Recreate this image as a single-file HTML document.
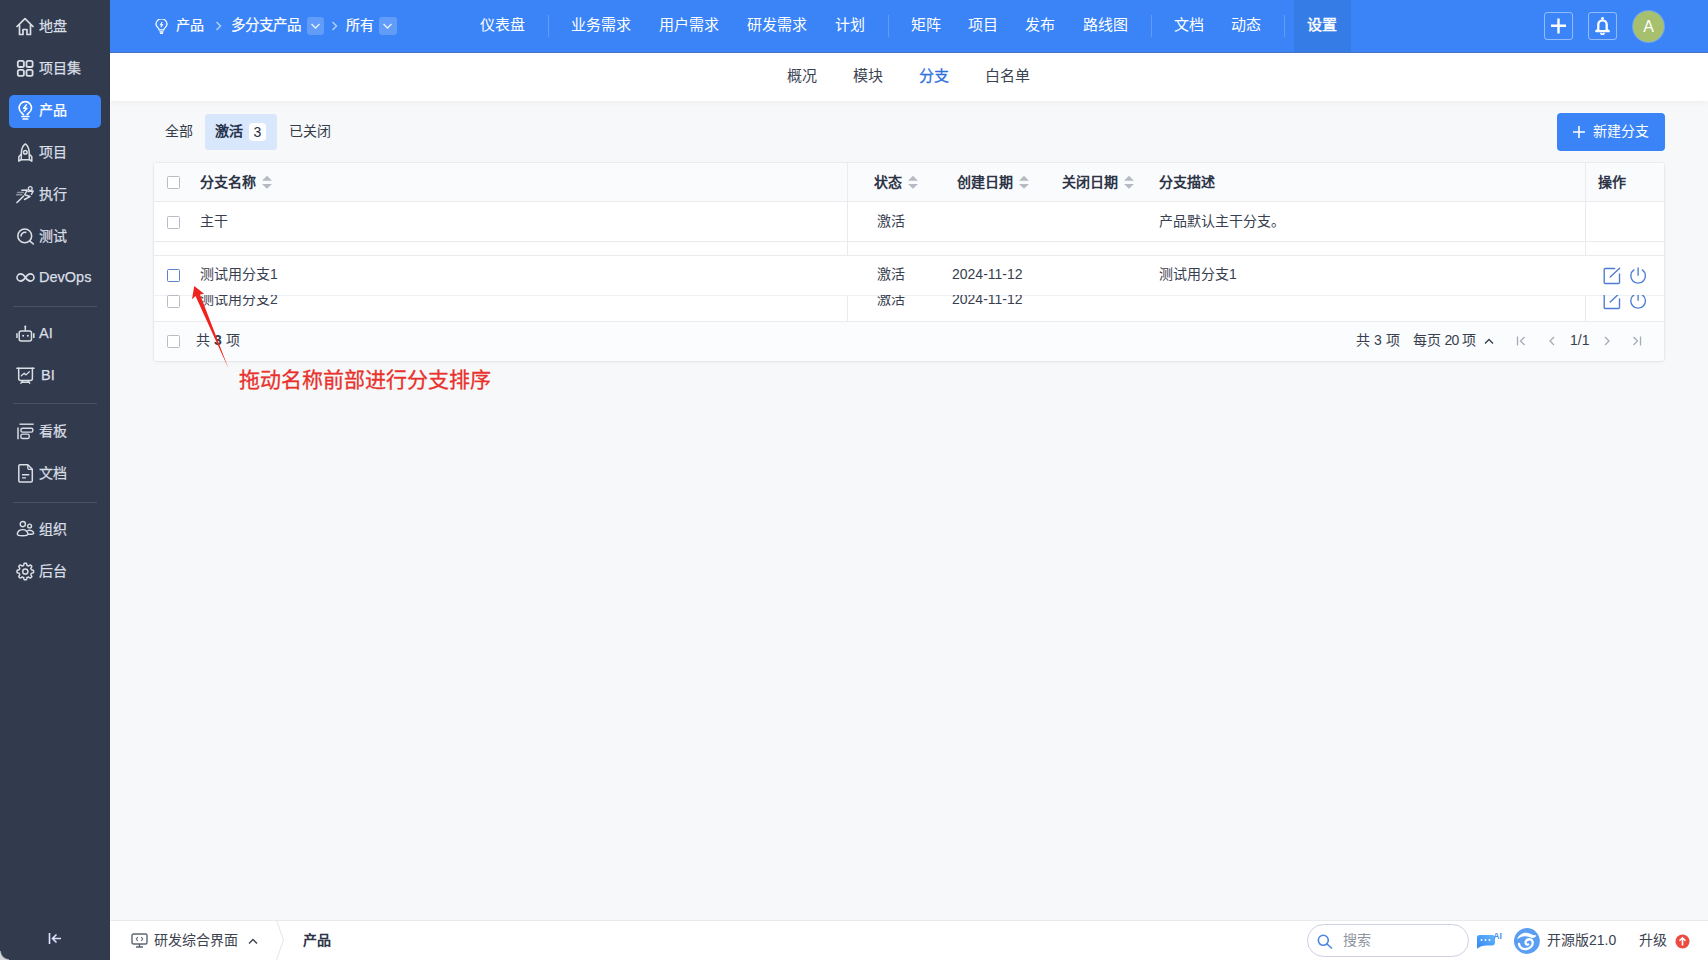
<!DOCTYPE html>
<html lang="zh-CN">
<head>
<meta charset="utf-8">
<style>
*{box-sizing:border-box;margin:0;padding:0}
html,body{width:1708px;height:960px;overflow:hidden}
body{font-family:"Liberation Sans",sans-serif;font-size:14px;color:#313c52;background:#f7f8fa;position:relative}
.a{position:absolute;white-space:nowrap}
#side{position:absolute;left:0;top:0;width:110px;height:960px;background:#313b4d}
#side .it{position:absolute;left:0;width:110px;height:20px;color:#dadee5;font-size:14px;line-height:20px;-webkit-text-stroke:0.25px #dadee5}
#side .it svg{position:absolute;left:16px;top:1px}
#side .it span{position:absolute;left:39px;top:0}
#side .dv{position:absolute;left:13px;width:84px;height:1px;background:#48536a}
#side .act{position:absolute;left:9px;top:95px;width:92px;height:33px;background:#3a84f8;border-radius:5px}
#hdr{position:absolute;left:110px;top:0;width:1598px;height:52px;background:#3a84f8}
.wt{color:#fff}
.nav{position:absolute;top:14px;color:#fff;font-size:15px;line-height:22px}
.nsep{position:absolute;top:15px;width:1px;height:22px;background:rgba(255,255,255,.2)}
#sub{position:absolute;left:110px;top:53px;width:1598px;height:48px;background:#fff;box-shadow:0 3px 6px -1px rgba(0,0,0,.045)}
.sn{position:absolute;top:66px;font-size:15px;line-height:20px;color:#3c4353}
#tbl{position:absolute;left:154px;top:163px;width:1510px;height:198px;background:#fff;border-radius:3px;box-shadow:0 0 0 1px rgba(20,30,60,.045),0 1px 4px rgba(0,0,0,.05)}
.hl{position:absolute;height:1px;background:#e9ebef}
.vl{position:absolute;width:1px;background:#e9ebef}
.cb{position:absolute;width:13px;height:13px;border:1px solid #b8bcc4;border-radius:1.5px;background:#fff}
.th{position:absolute;font-weight:bold;color:#2c3446;font-size:14px;line-height:20px}
.td{position:absolute;color:#38404f;font-size:14px;line-height:20px}
.sort{position:absolute;width:10px;height:14px}
#foot{position:absolute;left:110px;top:920px;width:1598px;height:40px;background:#fff;border-top:1px solid #e8eaee}
</style>
</head>
<body>

<!-- SIDEBAR -->
<div id="side">
  <div class="act"></div>
  <div class="it" style="top:16px"><svg width="20" height="19" viewBox="0 0 20 19" fill="none" stroke="#dadee5" stroke-width="1.7" stroke-linejoin="round" style="left:15px;top:1px"><path d="M1.5 10 L10 1.6 L18.5 10 M4.5 7.5 V17.5 H8 V12.5 H12 V17.5 H15.5 V7.5"/></svg><span>地盘</span></div>
  <div class="it" style="top:58px"><svg width="20" height="19" viewBox="0 0 20 19" fill="none" stroke="#dadee5" stroke-width="1.8" style="left:15px;top:1px"><rect x="2.8" y="1.9" width="6.1" height="6.1" rx="1.6"/><rect x="11.5" y="1.9" width="6.1" height="6.1" rx="1.6"/><rect x="2.8" y="10.9" width="6.1" height="5.9" rx="1.6"/><rect x="11.5" y="10.9" width="6.1" height="5.9" rx="1.6"/></svg><span>项目集</span></div>
  <div class="it" style="top:100px;color:#fff;-webkit-text-stroke:0.25px #fff"><svg width="20" height="21" viewBox="0 0 20 21" fill="none" stroke="#fff" stroke-width="1.6" stroke-linecap="round" style="left:15px;top:0"><path d="M8.4 14.6 L6.74 12.88 A6.2 6.2 0 1 1 13.86 12.88 L12.2 14.6"/><path d="M6.9 16.5 H13.9 M8 19 H12.8"/><path d="M11.4 4.8 L8.7 8.3 H11.9 L9.2 11.2" stroke-width="1.5" stroke-linejoin="round"/></svg><span>产品</span></div>
  <div class="it" style="top:142px"><svg width="20" height="20" viewBox="0 0 20 20" fill="none" stroke="#dadee5" stroke-width="1.5" stroke-linejoin="round" style="left:15px;top:1px"><path d="M10.3 0.9 C13.1 3 14.4 6.5 14.2 11 L14.4 16.8 H6.2 L6.4 11 C6.2 6.5 7.5 3 10.3 0.9 Z"/><path d="M6.4 11 L3.8 13.8 V18.2 L6.2 16.6 M14.2 11 L16.8 13.8 V18.2 L14.4 16.6"/><circle cx="10.3" cy="9.2" r="1.8"/></svg><span>项目</span></div>
  <div class="it" style="top:184px"><svg width="20" height="20" viewBox="0 0 20 20" fill="none" stroke="#dadee5" stroke-width="1.5" stroke-linecap="round" stroke-linejoin="round" style="left:15px;top:1px"><circle cx="15.25" cy="3.5" r="1.9" stroke-width="1.3"/><path d="M6.75 5.25 L12.25 5 L9.75 9.75 L15 11.5 L9.5 14.5"/><path d="M13 6.5 L18.2 6 L16.5 9.25"/><path d="M2 17.5 L8.5 11.25" stroke-width="1.7"/><path d="M2.5 7.5 H8.5 M1.5 9.75 H7" stroke="#8a909b" stroke-width="1.3"/></svg><span>执行</span></div>
  <div class="it" style="top:226px"><svg width="20" height="20" viewBox="0 0 20 20" fill="none" stroke="#dadee5" stroke-width="1.6" stroke-linecap="round" style="left:15px;top:1px"><circle cx="9.75" cy="8.9" r="6.9"/><path d="M6 8.9 A3.9 3.9 0 0 1 10.7 5.4"/><path d="M14.7 13.8 L18.3 17"/></svg><span>测试</span></div>
  <div class="it" style="top:268px"><svg width="21" height="20" viewBox="0 0 21 20" fill="none" stroke="#dadee5" stroke-width="1.6" style="left:15px;top:0"><path d="M10.5 9.5 C8.6 6.6 7.2 5.9 5.6 5.9 A3.6 3.6 0 0 0 5.6 13.1 C7.2 13.1 8.6 12.4 10.5 9.5 C12.4 6.6 13.8 5.9 15.4 5.9 A3.6 3.6 0 0 1 15.4 13.1 C13.8 13.1 12.4 12.4 10.5 9.5 Z"/></svg><span style="font-size:14.5px;top:-1px">DevOps</span></div>
  <div class="dv" style="top:306px"></div>
  <div class="it" style="top:323px"><svg width="21" height="20" viewBox="0 0 21 20" fill="none" stroke="#dadee5" stroke-width="1.5" style="left:15px;top:1px"><rect x="4.2" y="7" width="12.3" height="10" rx="2"/><path d="M10.3 3 V7"/><circle cx="10.3" cy="2.6" r="1.1" fill="#dadee5" stroke="none"/><rect x="1.2" y="9.2" width="1.5" height="4.8" fill="#dadee5" stroke="none"/><rect x="18" y="9.2" width="1.6" height="4.8" fill="#dadee5" stroke="none"/><circle cx="8.1" cy="11.8" r="1" fill="#dadee5" stroke="none"/><circle cx="12.9" cy="11.8" r="1" fill="#dadee5" stroke="none"/></svg><span style="font-size:14.5px">AI</span></div>
  <div class="it" style="top:365px"><svg width="21" height="20" viewBox="0 0 21 20" fill="none" stroke="#dadee5" stroke-width="1.5" stroke-linecap="round" stroke-linejoin="round" style="left:15px;top:1px"><path d="M1.9 2.2 H19"/><path d="M3.7 2.2 V12.6 Q3.7 14.6 5.7 14.6 H15.4 Q17.4 14.6 17.4 12.6 V2.2"/><path d="M7.8 14.6 L6 17.1 M12.9 14.6 L14.7 17.1 M6.5 16.3 H14.2"/><path d="M6.3 9.8 L9.2 7.3 L11 8.9 L14.3 5.8" stroke-width="1.3"/></svg><span style="left:41px;font-size:14.5px">BI</span></div>
  <div class="dv" style="top:403px"></div>
  <div class="it" style="top:421px"><svg width="20" height="20" viewBox="0 0 20 20" fill="none" stroke="#dadee5" stroke-width="1.4" style="left:17px;top:1px"><path d="M2.5 2.2 H16.7"/><path d="M1 5.5 V17.2" stroke-width="1.5"/><rect x="3.9" y="6.3" width="12" height="3.8" rx="1.6"/><rect x="3.9" y="12.1" width="8.3" height="4.4" rx="1.6"/></svg><span>看板</span></div>
  <div class="it" style="top:463px"><svg width="20" height="20" viewBox="0 0 20 20" fill="none" stroke="#dadee5" stroke-width="1.5" stroke-linejoin="round" style="left:17px;top:1px"><path d="M3 0.8 H10.8 L15.3 5.3 V16.8 Q15.3 18 14.1 18 H3 Q1.8 18 1.8 16.8 V2 Q1.8 0.8 3 0.8 Z"/><path d="M10.8 0.8 V4.1 Q10.8 5.3 12 5.3 H15.3" stroke-width="1.3"/><path d="M5 10.8 H12.2 M5 13.9 H9" stroke-width="1.4"/></svg><span>文档</span></div>
  <div class="dv" style="top:502px"></div>
  <div class="it" style="top:519px"><svg width="21" height="20" viewBox="0 0 21 20" fill="none" stroke="#dadee5" stroke-width="1.4" style="left:15px;top:1px"><circle cx="7.8" cy="4.1" r="2.6"/><circle cx="14.6" cy="6" r="1.9"/><path d="M2.3 14 A5.3 4.4 0 0 1 12.9 14 Q12.9 15.8 7.6 15.8 Q2.3 15.8 2.3 14 Z"/><path d="M12.3 10.6 Q14.6 9.8 16.6 10.6 Q18.7 11.8 18.7 13 Q18.7 14.3 15 14.3 H12.9"/></svg><span>组织</span></div>
  <div class="it" style="top:561px"><svg width="21" height="20" viewBox="0 0 21 20" fill="none" stroke="#dadee5" stroke-width="1.5" stroke-linejoin="round" style="left:15px;top:1px"><path d="M10.30 1.20 L10.84 1.22 L11.38 1.27 L11.72 2.34 L11.93 3.41 L12.33 3.53 L12.71 3.68 L13.09 3.85 L13.45 4.04 L14.36 3.43 L15.35 2.92 L15.77 3.26 L16.17 3.63 L16.54 4.03 L16.88 4.45 L16.37 5.44 L15.76 6.35 L15.95 6.71 L16.12 7.09 L16.27 7.47 L16.39 7.87 L17.46 8.08 L18.53 8.42 L18.58 8.96 L18.60 9.50 L18.58 10.04 L18.53 10.58 L17.46 10.92 L16.39 11.13 L16.27 11.53 L16.12 11.91 L15.95 12.29 L15.76 12.65 L16.37 13.56 L16.88 14.55 L16.54 14.97 L16.17 15.37 L15.77 15.74 L15.35 16.08 L14.36 15.57 L13.45 14.96 L13.09 15.15 L12.71 15.32 L12.33 15.47 L11.93 15.59 L11.72 16.66 L11.38 17.73 L10.84 17.78 L10.30 17.80 L9.76 17.78 L9.22 17.73 L8.88 16.66 L8.67 15.59 L8.27 15.47 L7.89 15.32 L7.51 15.15 L7.15 14.96 L6.24 15.57 L5.25 16.08 L4.83 15.74 L4.43 15.37 L4.06 14.97 L3.72 14.55 L4.23 13.56 L4.84 12.65 L4.65 12.29 L4.48 11.91 L4.33 11.53 L4.21 11.13 L3.14 10.92 L2.07 10.58 L2.02 10.04 L2.00 9.50 L2.02 8.96 L2.07 8.42 L3.14 8.08 L4.21 7.87 L4.33 7.47 L4.48 7.09 L4.65 6.71 L4.84 6.35 L4.23 5.44 L3.72 4.45 L4.06 4.03 L4.43 3.63 L4.83 3.26 L5.25 2.92 L6.24 3.43 L7.15 4.04 L7.51 3.85 L7.89 3.68 L8.27 3.53 L8.67 3.41 L8.88 2.34 L9.22 1.27 L9.76 1.22 L10.30 1.20 Z"/><circle cx="10.3" cy="9.5" r="2.6"/></svg><span>后台</span></div>
  <svg class="a" style="left:48px;top:932px" width="14" height="13" viewBox="0 0 14 13" fill="none" stroke="#dfe3ff" stroke-width="1.6"><path d="M1.5 1 V12 M13 6.5 H4.5 M8.5 2.5 L4.5 6.5 L8.5 10.5"/></svg>
  <div class="a" style="left:0;top:951px;width:9px;height:9px;background:radial-gradient(circle at 9px 0, rgba(0,0,0,0) 7.5px, #d3d5d9 9px)"></div>
</div>

<!-- HEADER -->
<div id="hdr"></div>
<div class="a" style="left:110px;top:52px;width:1598px;height:1px;background:#4775c2"></div>
<svg class="a" style="left:155px;top:19px" width="13" height="15" viewBox="0 0 13 15" fill="none" stroke="#fff" stroke-width="1.3"><path d="M4.2 10.8 C4.2 9 1 8 1 5.3 A5.5 5.5 0 0 1 12 5.3 C12 8 8.8 9 8.8 10.8 Z"/><path d="M4.5 12.8 H8.5 M5 14.3 H8"/><path d="M7.2 3 L5.5 5.8 H7.5 L5.8 8.3" stroke-width="1.1"/></svg>
<div class="a wt" style="left:176px;top:15px;font-size:14px;line-height:20px;-webkit-text-stroke:0.2px #fff">产品</div>
<svg class="a" style="left:215px;top:21px" width="7" height="10" viewBox="0 0 7 10" fill="none" stroke="rgba(255,255,255,.6)" stroke-width="1.5"><path d="M1.5 1 L5.5 5 L1.5 9"/></svg>
<div class="a wt" style="left:231px;top:15px;font-size:14.5px;line-height:20px;-webkit-text-stroke:0.2px #fff">多分支产品</div>
<div class="a" style="left:307px;top:17px;width:17px;height:18px;background:rgba(255,255,255,.2);border-radius:3px"></div>
<svg class="a" style="left:310px;top:22px" width="11" height="8" viewBox="0 0 11 8" fill="none" stroke="rgba(255,255,255,.85)" stroke-width="1.3"><path d="M1.5 2 L5.5 6 L9.5 2"/></svg>
<svg class="a" style="left:331px;top:21px" width="7" height="10" viewBox="0 0 7 10" fill="none" stroke="rgba(255,255,255,.6)" stroke-width="1.5"><path d="M1.5 1 L5.5 5 L1.5 9"/></svg>
<div class="a wt" style="left:346px;top:15px;font-size:14px;line-height:20px;-webkit-text-stroke:0.2px #fff">所有</div>
<div class="a" style="left:379px;top:17px;width:18px;height:18px;background:rgba(255,255,255,.2);border-radius:3px"></div>
<svg class="a" style="left:382px;top:22px" width="11" height="8" viewBox="0 0 11 8" fill="none" stroke="rgba(255,255,255,.85)" stroke-width="1.3"><path d="M1.5 2 L5.5 6 L9.5 2"/></svg>

<div class="nav" style="left:480px">仪表盘</div>
<div class="nsep" style="left:548px"></div>
<div class="nav" style="left:571px">业务需求</div>
<div class="nav" style="left:659px">用户需求</div>
<div class="nav" style="left:747px">研发需求</div>
<div class="nav" style="left:835px">计划</div>
<div class="nsep" style="left:888px"></div>
<div class="nav" style="left:911px">矩阵</div>
<div class="nav" style="left:968px">项目</div>
<div class="nav" style="left:1025px">发布</div>
<div class="nav" style="left:1083px">路线图</div>
<div class="nsep" style="left:1151px"></div>
<div class="nav" style="left:1174px">文档</div>
<div class="nav" style="left:1231px">动态</div>
<div class="nsep" style="left:1284px"></div>
<div class="a" style="left:1294px;top:0;width:57px;height:52px;background:#357ce6"></div>
<div class="nav" style="left:1307px;-webkit-text-stroke:0.45px #fff">设置</div>

<div class="a" style="left:1544px;top:12px;width:29px;height:28px;border:1px solid rgba(255,255,255,.45);border-radius:3px"></div>
<svg class="a" style="left:1551px;top:18px" width="16" height="16" viewBox="0 0 16 16" stroke="#fff" stroke-width="2.4"><path d="M7.5 0.5 V15.5 M0 7.8 H15"/></svg>
<div class="a" style="left:1588px;top:12px;width:29px;height:28px;border:1px solid rgba(255,255,255,.45);border-radius:3px"></div>
<svg class="a" style="left:1594px;top:16px" width="17" height="19" viewBox="0 0 17 19" fill="none" stroke="#fff" stroke-width="2.3" stroke-linejoin="round"><path d="M4.3 13.8 V8.5 A4.2 4.2 0 0 1 12.7 8.5 V13.8 L14.8 15.2 H2.2 Z"/><circle cx="8.5" cy="2.3" r="1.4" fill="#fff" stroke="none"/><path d="M7 16.8 A1.5 1.5 0 0 0 10 16.8" stroke-width="1.8"/></svg>
<div class="a" style="left:1633px;top:11px;width:31px;height:31px;border-radius:50%;background:#a6c06e;box-shadow:0 0 0 1px rgba(255,255,255,.25);color:#fff;font-size:16px;line-height:31px;text-align:center">A</div>

<!-- SUBNAV -->
<div id="sub"></div>
<div class="sn" style="left:787px">概况</div>
<div class="sn" style="left:853px">模块</div>
<div class="sn" style="left:919px;color:#2f72dd;-webkit-text-stroke:0.3px #2f72dd">分支</div>
<div class="sn" style="left:985px">白名单</div>

<!-- TABS -->
<div class="a" style="left:165px;top:121px;font-size:14px;line-height:20px;color:#353c4a">全部</div>
<div class="a" style="left:205px;top:114px;width:72px;height:36px;background:#d9e7fc;border-radius:3px"></div>
<div class="a" style="left:215px;top:121px;font-size:14px;line-height:20px;color:#25324a;font-weight:bold">激活</div>
<div class="a" style="left:249px;top:123px;width:17px;height:18px;background:#fff;border-radius:4px;font-size:14px;line-height:18px;text-align:center;color:#25324a">3</div>
<div class="a" style="left:289px;top:121px;font-size:14px;line-height:20px;color:#353c4a">已关闭</div>

<div class="a" style="left:1557px;top:113px;width:108px;height:38px;background:#3a84f8;border-radius:4px"></div>
<svg class="a" style="left:1573px;top:126px" width="12" height="12" viewBox="0 0 12 12" stroke="#fff" stroke-width="1.6"><path d="M6 0 V12 M0 6 H12"/></svg>
<div class="a wt" style="left:1593px;top:121px;font-size:14px;line-height:20px">新建分支</div>

<!-- TABLE -->
<div id="tbl">
  <div class="a" style="left:0;top:0;width:1510px;height:38px;background:#fafbfd"></div>
  <div class="a" style="left:0;top:159px;width:1510px;height:39px;background:#fbfcfe;border-radius:0 0 3px 3px"></div>
</div>
<!-- horizontal lines -->
<div class="hl" style="left:154px;top:201px;width:1510px"></div>
<div class="hl" style="left:154px;top:241px;width:1510px"></div>
<div class="hl" style="left:154px;top:255px;width:1510px"></div>
<div class="hl" style="left:154px;top:295px;width:1510px;background:#eef0f3"></div>
<div class="hl" style="left:154px;top:321px;width:1510px"></div>
<!-- vertical lines -->
<div class="vl" style="left:847px;top:163px;height:92px"></div>
<div class="vl" style="left:847px;top:296px;height:25px"></div>
<div class="vl" style="left:1585px;top:163px;height:92px"></div>
<div class="vl" style="left:1585px;top:296px;height:25px"></div>

<!-- header row -->
<div class="cb" style="left:167px;top:176px"></div>
<div class="th" style="left:200px;top:172px">分支名称</div>
<svg class="sort" style="left:262px;top:175px" viewBox="0 0 10 14"><path d="M5 0.7 L10 5.8 H0 Z M5 13.7 L10 9 H0 Z" fill="#b6bac3"/></svg>
<div class="th" style="left:874px;top:172px">状态</div>
<svg class="sort" style="left:908px;top:175px" viewBox="0 0 10 14"><path d="M5 0.7 L10 5.8 H0 Z M5 13.7 L10 9 H0 Z" fill="#b6bac3"/></svg>
<div class="th" style="left:957px;top:172px">创建日期</div>
<svg class="sort" style="left:1019px;top:175px" viewBox="0 0 10 14"><path d="M5 0.7 L10 5.8 H0 Z M5 13.7 L10 9 H0 Z" fill="#b6bac3"/></svg>
<div class="th" style="left:1062px;top:172px">关闭日期</div>
<svg class="sort" style="left:1124px;top:175px" viewBox="0 0 10 14"><path d="M5 0.7 L10 5.8 H0 Z M5 13.7 L10 9 H0 Z" fill="#b6bac3"/></svg>
<div class="th" style="left:1159px;top:172px">分支描述</div>
<div class="th" style="left:1598px;top:172px">操作</div>

<!-- row 1 -->
<div class="cb" style="left:167px;top:216px"></div>
<div class="td" style="left:200px;top:211px">主干</div>
<div class="td" style="left:877px;top:211px">激活</div>
<div class="td" style="left:1159px;top:211px">产品默认主干分支。</div>

<!-- row 2 (behind, clipped) -->
<div class="a" style="left:154px;top:295px;width:1510px;height:26px;overflow:hidden">
  <div class="cb" style="left:13px;top:0px"></div>
  <div class="td" style="left:46px;top:-6px">测试用分支2</div>
  <div class="td" style="left:723px;top:-6px">激活</div>
  <div class="td" style="left:798px;top:-6px;font-family:'Liberation Sans'">2024-11-12</div>
  <svg class="a" style="left:1449px;top:-3px" width="18" height="18" viewBox="0 0 18 18" fill="none" stroke="#4d7bd6" stroke-width="1.35" stroke-linecap="round"><path d="M11.6 1.5 H2.3 Q1.2 1.5 1.2 2.6 V15.4 Q1.2 16.5 2.3 16.5 H15.4 Q16.5 16.5 16.5 15.4 V6.8"/><path d="M7.2 10 L16.6 1.2"/></svg>
  <svg class="a" style="left:1475px;top:-3px" width="18" height="18" viewBox="0 0 18 18" fill="none" stroke="#4d7bd6" stroke-width="1.35" stroke-linecap="round"><path d="M13.29 2.9 A7.3 7.3 0 1 1 4.91 2.9"/><path d="M9.1 0.9 V8.3"/></svg>
</div>

<!-- dragged row 3 -->
<div class="a" style="left:154px;top:255px;width:1510px;height:40px;background:#fff;border-top:1px solid #e9ebef"></div>
<div class="cb" style="left:167px;top:269px;border-color:#5a85c8"></div>
<div class="td" style="left:200px;top:264px">测试用分支1</div>
<div class="td" style="left:877px;top:264px">激活</div>
<div class="td" style="left:952px;top:264px;font-family:'Liberation Sans'">2024-11-12</div>
<div class="td" style="left:1159px;top:264px">测试用分支1</div>
<svg class="a" style="left:1603px;top:267px" width="18" height="18" viewBox="0 0 18 18" fill="none" stroke="#4d7bd6" stroke-width="1.35" stroke-linecap="round"><path d="M11.6 1.5 H2.3 Q1.2 1.5 1.2 2.6 V15.4 Q1.2 16.5 2.3 16.5 H15.4 Q16.5 16.5 16.5 15.4 V6.8"/><path d="M7.2 10 L16.6 1.2"/></svg>
<svg class="a" style="left:1629px;top:267px" width="18" height="18" viewBox="0 0 18 18" fill="none" stroke="#4d7bd6" stroke-width="1.35" stroke-linecap="round"><path d="M13.29 2.9 A7.3 7.3 0 1 1 4.91 2.9"/><path d="M9.1 0.9 V8.3"/></svg>

<!-- footer row -->
<div class="cb" style="left:167px;top:335px"></div>
<div class="td" style="left:196px;top:330px">共 <b>3</b> 项</div>
<div class="td" style="left:1356px;top:330px">共 3 项</div>
<div class="td" style="left:1413px;top:330px;word-spacing:-0.5px">每页 <span style="letter-spacing:-0.6px">20</span> 项</div>
<svg class="a" style="left:1484px;top:337px" width="10" height="8" viewBox="0 0 10 8" fill="none" stroke="#38404f" stroke-width="1.4"><path d="M1 6.5 L5 2.5 L9 6.5"/></svg>
<svg class="a" style="left:1516px;top:335px" width="10" height="12" viewBox="0 0 10 12" fill="none" stroke="#a6abb5" stroke-width="1.3"><path d="M1.5 1.5 V10.5 M8.5 2 L4.5 6 L8.5 10"/></svg>
<svg class="a" style="left:1548px;top:335px" width="8" height="12" viewBox="0 0 8 12" fill="none" stroke="#a6abb5" stroke-width="1.3"><path d="M6 2 L2 6 L6 10"/></svg>
<div class="td" style="left:1570px;top:330px;font-family:'Liberation Sans'">1/1</div>
<svg class="a" style="left:1603px;top:335px" width="8" height="12" viewBox="0 0 8 12" fill="none" stroke="#a6abb5" stroke-width="1.3"><path d="M2 2 L6 6 L2 10"/></svg>
<svg class="a" style="left:1632px;top:335px" width="10" height="12" viewBox="0 0 10 12" fill="none" stroke="#a6abb5" stroke-width="1.3"><path d="M1.5 2 L5.5 6 L1.5 10 M8.5 1.5 V10.5"/></svg>

<!-- annotation arrow -->
<svg class="a" style="left:0;top:0" width="600" height="400" viewBox="0 0 600 400"><path d="M194.3 286 L204 293.7 L200 294.5 L228.5 368.5 L195.5 296 L192 299.2 Z" fill="#f0221d"/></svg>
<div class="a" style="left:239px;top:366px;font-size:21px;line-height:28px;color:#e8322b;-webkit-text-stroke:0.3px #e8322b">拖动名称前部进行分支排序</div>


<!-- FOOTER BAR -->
<div id="foot"></div>
<svg class="a" style="left:131px;top:933px" width="17" height="15" viewBox="0 0 17 15" fill="none" stroke="#5d6473" stroke-width="1.4"><rect x="1" y="1" width="15" height="10" rx="1.5"/><path d="M8.5 11 V14 M5 14 H12"/><path d="M6.8 4 L5.3 6 L6.8 8 M10.2 4 L11.7 6 L10.2 8" stroke-width="1.1"/></svg>
<div class="a" style="left:154px;top:930px;font-size:14px;line-height:20px;color:#3b4250">研发综合界面</div>
<svg class="a" style="left:248px;top:937px" width="10" height="8" viewBox="0 0 10 8" fill="none" stroke="#3b4250" stroke-width="1.4"><path d="M1 6.5 L5 2.5 L9 6.5"/></svg>
<svg class="a" style="left:275px;top:920px" width="10" height="40" viewBox="0 0 10 40" fill="none" stroke="#e3e6ea" stroke-width="1"><path d="M1.5 0 L8.5 20 L1.5 40"/></svg>
<div class="a" style="left:303px;top:930px;font-size:14px;line-height:20px;color:#2c3446;font-weight:bold">产品</div>

<div class="a" style="left:1307px;top:924px;width:162px;height:33px;border:1px solid #cdd1e2;border-radius:17px;background:#fff"></div>
<svg class="a" style="left:1317px;top:934px" width="16" height="15" viewBox="0 0 16 15" fill="none" stroke="#4c86e0" stroke-width="1.6" stroke-linecap="round"><circle cx="6.3" cy="6.3" r="5"/><path d="M10 10 L14.5 14"/></svg>
<div class="a" style="left:1343px;top:930px;font-size:14px;line-height:20px;color:#8e94a0">搜索</div>
<svg class="a" style="left:1476px;top:931px" width="27" height="19" viewBox="0 0 27 19"><defs><linearGradient id="g1" x1="0" y1="1" x2="1" y2="0"><stop offset="0" stop-color="#3585f5"/><stop offset="1" stop-color="#62b8fb"/></linearGradient></defs><path d="M1 6.8 Q1 4 3.8 4 H16.2 Q19 4 19 6.8 V11.5 Q19 14.5 16 14.5 H10 Q5 14.5 1.5 17.5 Q1 17.8 1 17 Z" fill="url(#g1)"/><circle cx="5.5" cy="9" r="0.9" fill="#fff"/><circle cx="9.5" cy="9" r="0.9" fill="#fff"/><circle cx="13.5" cy="9" r="0.9" fill="#fff"/><text x="17.2" y="7.6" font-family="Liberation Sans" font-size="8.6" font-weight="bold" fill="#4a90f0">AI</text></svg>
<svg class="a" style="left:1513px;top:927px" width="28" height="28" viewBox="0 0 28 28"><circle cx="13.9" cy="14" r="12.9" fill="#5a9ef4"/><path d="M4 12 C6 8 9.5 5.5 13.5 5.8 C17.5 6 19.5 9 23.3 8.2 C22.8 10.5 20.5 11.3 18.5 10.8 C16 10.2 13.5 8.6 10 9.5 C7.5 10.2 5.5 11.5 4 12 Z" fill="#fff"/><path d="M6 17 C6.5 21 10 22.5 13.5 22 C17.5 21.5 20.5 18 19.5 14.5 C18.5 11.5 14 11.5 12.8 14.5 C12 16.5 13.5 18.2 15.2 17.5" fill="none" stroke="#fff" stroke-width="2.3" stroke-linecap="round"/></svg>
<div class="a" style="left:1547px;top:930px;font-size:14px;line-height:20px;color:#3b4250">开源版21.0</div>
<div class="a" style="left:1639px;top:930px;font-size:14px;line-height:20px;color:#3b4250">升级</div>
<svg class="a" style="left:1675px;top:934px" width="15" height="15" viewBox="0 0 15 15"><circle cx="7.5" cy="7.5" r="7" fill="#ec4b42"/><path d="M7.5 11.5 V4 M4.5 6.8 L7.5 3.8 L10.5 6.8" fill="none" stroke="#fff" stroke-width="1.6"/></svg>

</body>
</html>
